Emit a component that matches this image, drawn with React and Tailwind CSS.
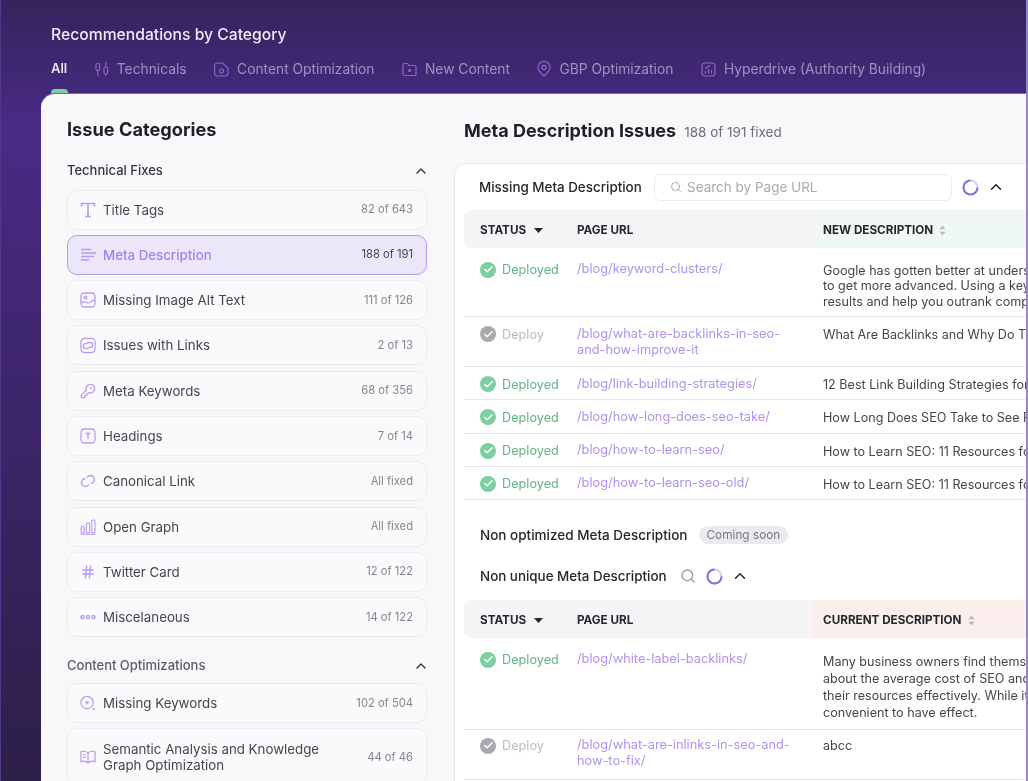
import { ChevronUp, Hash, KeyRound, Search, Check } from 'lucide-react'

const font = 'font-["Inter",sans-serif]'

function SerifT() {
  return (
    <svg width="16" height="16" viewBox="0 0 16 16" fill="none" stroke="currentColor" strokeWidth="1.600">
      <path d="M1.500 4.500V1.500H14.500V4.500M8 1.500V14.500M5 14.500H11" />
    </svg>
  )
}

function MetaLines() {
  return (
    <svg width="16" height="14" viewBox="0 0 16 14" fill="none" stroke="currentColor" strokeWidth="1.500">
      <path d="M1 1.500h10M1 5h15M1 8.500h13M1 12h8" />
    </svg>
  )
}

function BoxT() {
  return (
    <svg width="16" height="16" viewBox="0 0 16 16" fill="none" stroke="currentColor" strokeWidth="1.300">
      <rect x="1" y="1" width="14" height="14" rx="3.500" />
      <path d="M5.500 5.500h5M8 5.500v5.500" />
    </svg>
  )
}

function ImageIcon() {
  return (
    <svg width="16" height="16" viewBox="0 0 16 16" fill="none" stroke="currentColor" strokeWidth="1.300">
      <rect x="1" y="1" width="14" height="14" rx="3.500" />
      <circle cx="5.500" cy="5.500" r="1.400" />
      <path d="M1.500 11c3-2.500 4-1 6 0s4-2.500 7-3" />
    </svg>
  )
}

function LinkBox() {
  return (
    <svg width="17" height="17" viewBox="0 0 17 17" fill="none" stroke="currentColor" strokeWidth="1.300">
      <rect x="1" y="1" width="15" height="15" rx="4" />
      <path d="M7.500 6.500H6a2.500 2.500 0 0 0 0 5h2a2.500 2.500 0 0 0 2-1" />
      <path d="M9.500 10.500H11a2.500 2.500 0 0 0 0-5H9a2.500 2.500 0 0 0-2 1" />
    </svg>
  )
}

function ChainLink() {
  return (
    <svg width="16" height="16" viewBox="0 0 16 16" fill="none" stroke="currentColor" strokeWidth="1.400">
      <path d="M7 4.500a4 4 0 1 1 3.500 6" />
      <path d="M9 11.500a4 4 0 1 1-3.500-6" />
    </svg>
  )
}

function Bars() {
  return (
    <svg width="16" height="16" viewBox="0 0 16 16" fill="none" stroke="currentColor" strokeWidth="1.100">
      <rect x="1" y="7.500" width="3.200" height="6" rx="1" />
      <rect x="6.400" y="4" width="3.200" height="9.500" rx="1" />
      <rect x="11.800" y="1" width="3.200" height="12.500" rx="1" />
      <path d="M0.500 15.200h15" strokeWidth="1.300" />
    </svg>
  )
}

function Dots() {
  return (
    <svg width="16" height="6" viewBox="0 0 16 6" fill="#d8cdf5" stroke="currentColor" strokeWidth="1.100">
      <circle cx="2.500" cy="3" r="1.800" />
      <circle cx="8" cy="3" r="1.800" />
      <circle cx="13.500" cy="3" r="1.800" />
    </svg>
  )
}

function SearchPlus() {
  return (
    <svg width="17" height="17" viewBox="0 0 17 17" fill="none" stroke="currentColor" strokeWidth="1.300">
      <circle cx="7.500" cy="7.500" r="6.500" />
      <path d="M7.500 5.500v4M5.500 7.500h4" />
      <circle cx="14.500" cy="14.500" r="1.200" fill="currentColor" stroke="none" />
    </svg>
  )
}

function Book() {
  return (
    <svg width="17" height="16" viewBox="0 0 17 16" fill="none" stroke="currentColor" strokeWidth="1.300">
      <path d="M8.500 3.500C6.500 2 3.500 1.500 1 2.500V13c2.500-1 5.500-.5 7.500 1.500 2-2 5-2.500 7.500-1.500V2.500C13.500 1.500 10.500 2 8.500 3.500zM8.500 3.500v11M3.500 5.500h2.500M3.500 8.500h2.500" />
    </svg>
  )
}

function Candles() {
  return (
    <svg width="14" height="16" viewBox="0 0 14 16" fill="none" stroke="currentColor" strokeWidth="1.200">
      <rect x="1" y="2.500" width="3.600" height="7" rx="1.600" />
      <path d="M2.800 9.500V15" />
      <rect x="9" y="6" width="3.600" height="7" rx="1.600" />
      <path d="M10.800 1v5M10.800 13v2" />
    </svg>
  )
}

function DocIcon() {
  return (
    <svg width="15" height="15" viewBox="0 0 15 15" fill="none" stroke="currentColor" strokeWidth="1.200">
      <path d="M3.500 1h5l5.500 5v5a3 3 0 0 1-3 3h-7.500a3 3 0 0 1-3-3V4a3 3 0 0 1 3-3z" />
      <circle cx="7.500" cy="9" r="2" />
    </svg>
  )
}

function FolderIcon() {
  return (
    <svg width="15" height="15" viewBox="0 0 15 15" fill="none" stroke="currentColor" strokeWidth="1.200">
      <path d="M1 3a1.500 1.500 0 0 1 1.500-1.500h3L7 3.500h5.500A1.500 1.500 0 0 1 14 5v7a1.500 1.500 0 0 1-1.500 1.500h-10A1.500 1.500 0 0 1 1 12z" />
      <circle cx="7.500" cy="8.500" r="0.900" fill="currentColor" />
    </svg>
  )
}

function PinIcon() {
  return (
    <svg width="14" height="16" viewBox="0 0 14 16" fill="none" stroke="currentColor" strokeWidth="1.200">
      <path d="M7 15C3.500 12 1 9.500 1 6.500a6 6 0 0 1 12 0C13 9.500 10.500 12 7 15z" />
      <circle cx="7" cy="6.500" r="2.200" />
    </svg>
  )
}

function ChartBox() {
  return (
    <svg width="15" height="15" viewBox="0 0 15 15" fill="none" stroke="currentColor" strokeWidth="1.200">
      <rect x="1" y="1" width="13" height="13" rx="3" />
      <path d="M4.500 11.500V9M7.500 11.500V7M10.500 11.500V8M4 6.500 9 3.500" />
    </svg>
  )
}

function Spinner({ size = 17 }) {
  return (
    <svg width={size} height={size} viewBox="0 0 17 17" fill="none" strokeWidth="2">
      <circle cx="8.500" cy="8.500" r="7" stroke="#d9cdf3" />
      <path d="M8.500 1.500a7 7 0 1 0 7 7" stroke="#8f6fe0" />
    </svg>
  )
}

function Sort() {
  return (
    <svg width="7" height="11" viewBox="0 0 7 11" fill="#b9b9c0">
      <path d="M3.500 0.500 6.500 4.200H0.500zM3.500 10.500 0.500 6.800H6.500z" />
    </svg>
  )
}

function Caret() {
  return (
    <svg width="9" height="5" viewBox="0 0 9 5" fill="#232329">
      <path d="M0 0h9L4.500 5z" />
    </svg>
  )
}

function Tab({ icon, label }) {
  return (
    <div className="flex items-center gap-[8px] text-[13.800px] text-[#a090c4]">
      <span className="text-[#8568cc] flex">{icon}</span>
      {label}
    </div>
  )
}

function Item({ icon, label, count, active, tall }) {
  return (
    <div
      className={`flex items-center justify-between pl-[12px] pr-[13px] rounded-[10px] border ${
        tall ? 'h-[58px]' : 'h-[40px]'
      } ${active ? 'bg-[#ece7f8] border-[#b79bef] border-[1.500px]' : 'bg-[#fafafc] border-[#ececf0]'}`}
    >
      <div className="flex items-center gap-[7px]">
        <span className="text-[#b79bef] w-[16px] flex justify-center">{icon}</span>
        <span className={`max-w-[240px] text-[13.300px] leading-[16px] ${active ? 'text-[#a382ea] font-medium' : 'text-[#45454c]'}`}>{label}</span>
      </div>
      <span className={`text-[11.200px] shrink-0 ${active ? 'text-[#45454c]' : 'text-[#85858c]'}`}>{count}</span>
    </div>
  )
}

function Status({ done }) {
  return (
    <div className="flex items-center gap-[6px] -mt-[1px]">
      <span className={`w-[16px] h-[16px] rounded-full flex items-center justify-center ${done ? 'bg-[#7dcfa0]' : 'bg-[#a9a9ae]'}`}>
        <Check size={11} strokeWidth={3} color="white" />
      </span>
      <span className={`text-[12.700px] ${done ? 'text-[#62b286]' : 'text-[#bcbcc1]'}`}>{done ? 'Deployed' : 'Deploy'}</span>
    </div>
  )
}

function Row({ done, url, lines, height, cellTop = 'pt-[8.500px]', descTop = 'pt-[10px]' }) {
  return (
    <div className={`flex pl-[16px] border-b border-[#e8e8ec] ${height}`}>
      <div className={`w-[97px] shrink-0 ${cellTop}`}>
        <Status done={done} />
      </div>
      <div className={`w-[246px] shrink-0 ${cellTop} pr-[20px] text-[12.800px] leading-[16px] text-[#b092ec]`}>{url}</div>
      <div className={`flex-1 min-w-0 ${descTop} text-[12.600px] leading-[15.500px] text-[#45454c]`}>
        {lines.map((l) => (
          <div key={l} className="whitespace-nowrap">{l}</div>
        ))}
      </div>
    </div>
  )
}

function Head({ label, tint }) {
  return (
    <div className="flex h-[38px] items-center rounded-l-[8px] bg-[#f5f5f8] text-[11.700px] font-bold text-[#26262c]">
      <div className="w-[113px] pl-[16px] flex items-center gap-[8px] pt-[3px]">STATUS <Caret /></div>
      <div className="w-[234px] pt-[3px]">PAGE URL</div>
      <div className={`flex-1 h-full flex items-center gap-[6px] pl-[12px] pt-[3px] ${tint}`}>{label} <Sort /></div>
    </div>
  )
}

const technical = [
  { icon: <SerifT />, label: 'Title Tags', count: '82 of 643' },
  { icon: <MetaLines />, label: 'Meta Description', count: '188 of 191', active: true },
  { icon: <ImageIcon />, label: 'Missing Image Alt Text', count: '111 of 126' },
  { icon: <LinkBox />, label: 'Issues with Links', count: '2 of 13' },
  { icon: <KeyRound size={16} />, label: 'Meta Keywords', count: '68 of 356' },
  { icon: <BoxT />, label: 'Headings', count: '7 of 14' },
  { icon: <ChainLink />, label: 'Canonical Link', count: 'All fixed' },
  { icon: <Bars />, label: 'Open Graph', count: 'All fixed' },
  { icon: <Hash size={16} />, label: 'Twitter Card', count: '12 of 122' },
  { icon: <Dots />, label: 'Miscelaneous', count: '14 of 122' },
]

const content = [
  { icon: <SearchPlus />, label: 'Missing Keywords', count: '102 of 504' },
  { icon: <Book />, label: 'Semantic Analysis and Knowledge Graph Optimization', count: '44 of 46', tall: true },
]

export default function App() {
  return (
    <div className={`${font} w-[1028px] h-[781px] overflow-hidden flex flex-col border-l border-r-2 border-l-[#4f3a8a] border-r-[#9585c9] bg-gradient-to-b from-[#35245c] via-[#4a2a86] via-[16%] to-[#2c1f48] blur-[0.4px]`}>
      <header className="pl-[50px] pt-[25px] h-[94px] shrink-0">
        <h1 className="text-[15.700px] leading-[20px] font-medium text-[#efeaf8]">Recommendations by Category</h1>
        <nav className="flex items-center gap-[27.500px] mt-[14px] h-[20px]">
          <span className="text-[13px] font-semibold text-[#e9e4f4]">All</span>
          <Tab icon={<Candles />} label="Technicals" />
          <Tab icon={<DocIcon />} label="Content Optimization" />
          <Tab icon={<FolderIcon />} label="New Content" />
          <Tab icon={<PinIcon />} label="GBP Optimization" />
          <Tab icon={<ChartBox />} label="Hyperdrive (Authority Building)" />
        </nav>
        <div className="w-[17px] h-[5px] bg-[#7dcfa0] rounded-t-[4px] mt-[10px]" />
      </header>

      <main className="flex-1 min-h-0 ml-[40px] bg-[#f8f8fb] rounded-tl-[14px] shadow-[0_-1px_0_#7b63b5] flex overflow-hidden">
        <aside className="w-[413px] shrink-0 pl-[26px] pr-[27px]">
          <h2 className="text-[18.200px] leading-[24px] font-bold text-[#1f1f25] mt-[23px]">Issue Categories</h2>
          <div className="flex items-center justify-between mt-[21px] h-[18px] text-[13px] font-medium text-[#35353b]">
            Technical Fixes <ChevronUp size={16} className="-mr-[2px]" />
          </div>
          <div className="flex flex-col gap-[5.300px] mt-[9.500px]">
            {technical.map((i) => <Item key={i.label} {...i} />)}
          </div>
          <div className="flex items-center justify-between mt-[20px] h-[18px] text-[13px] font-medium text-[#5c5c63]">
            Content Optimizations <ChevronUp size={16} className="-mr-[2px] text-[#35353b]" />
          </div>
          <div className="flex flex-col gap-[5.300px] mt-[8px]">
            {content.map((i) => <Item key={i.label} {...i} />)}
          </div>
        </aside>

        <section className="flex-1 min-w-0">
          <div className="flex items-baseline gap-[8px] ml-[10px] mt-[25px] h-[24px]">
            <h2 className="text-[18px] leading-[24px] font-bold text-[#1f1f25]">Meta Description Issues</h2>
            <span className="text-[13.500px] text-[#6d6d74]">188 of 191 fixed</span>
          </div>

          <div className="mt-[20px] h-[700px] bg-white rounded-tl-[12px] border-l border-t border-[#eaeaee] pl-[9px]">
            <div className="flex items-center h-[46px] pl-[15px]">
              <span className="text-[13.400px] font-medium text-[#26262c] w-[175px] shrink-0">Missing Meta Description</span>
              <div className="w-[298px] h-[27px] rounded-[6px] border border-[#ececf0] flex items-center gap-[5px] pl-[15px] text-[13.500px] text-[#a9a9b0] shrink-0">
                <Search size={12} /> Search by Page URL
              </div>
              <span className="ml-[10px] flex"><Spinner /></span>
              <ChevronUp size={18} className="ml-[8px] text-[#26262c]" />
            </div>

            <Head label="NEW DESCRIPTION" tint="bg-[#f0f8f3]" />
            <Row
              done
              height="h-[69px]"
              cellTop="pt-[13px]"
              descTop="pt-[14.500px]"
              url="/blog/keyword-clusters/"
              lines={[
                'Google has gotten better at understanding search intent',
                'to get more advanced. Using a keyword cluster can improve',
                'results and help you outrank competitors',
              ]}
            />
            <Row height="h-[50px]" url="/blog/what-are-backlinks-in-seo-and-how-improve-it" lines={['What Are Backlinks and Why Do They Matter']} />
            <Row done height="h-[33.250px]" url="/blog/link-building-strategies/" lines={['12 Best Link Building Strategies for SEO']} />
            <Row done height="h-[33.250px]" url="/blog/how-long-does-seo-take/" lines={['How Long Does SEO Take to See Results']} />
            <Row done height="h-[33.250px]" url="/blog/how-to-learn-seo/" lines={['How to Learn SEO: 11 Resources for Beginners']} />
            <Row done height="h-[33.250px]" url="/blog/how-to-learn-seo-old/" lines={['How to Learn SEO: 11 Resources for Beginners']} />

            <div className="flex items-center gap-[11px] pl-[16px] mt-[25px] h-[20px]">
              <span className="text-[13.500px] font-medium text-[#26262c]">Non optimized Meta Description</span>
              <span className="h-[18px] px-[8px] rounded-full bg-[#ebebee] text-[11.800px] leading-[18px] text-[#77777e]">Coming soon</span>
            </div>
            <div className="flex items-center pl-[16px] mt-[21px] h-[20px]">
              <span className="text-[13.400px] font-medium text-[#26262c]">Non unique Meta Description</span>
              <Search size={16} className="ml-[13px] text-[#9a9aa0]" />
              <span className="ml-[10px] flex"><Spinner /></span>
              <ChevronUp size={18} className="ml-[8px] text-[#26262c]" />
            </div>
            <div className="mt-[14px]">
              <Head label="CURRENT DESCRIPTION" tint="bg-[#fbeeec]" />
            </div>
            <Row
              done
              height="h-[92px]"
              cellTop="pt-[13px]"
              descTop="pt-[15px] leading-[17px]"
              url="/blog/white-label-backlinks/"
              lines={[
                'Many business owners find themselves confused',
                'about the average cost of SEO and how to allocate',
                'their resources effectively. While it may seem',
                'convenient to have effect.',
              ]}
            />
            <Row height="h-[50px]" cellTop="pt-[7px]" descTop="pt-[8px]" url="/blog/what-are-inlinks-in-seo-and-how-to-fix/" lines={['abcc']} />
          </div>
        </section>
      </main>
    </div>
  )
}
